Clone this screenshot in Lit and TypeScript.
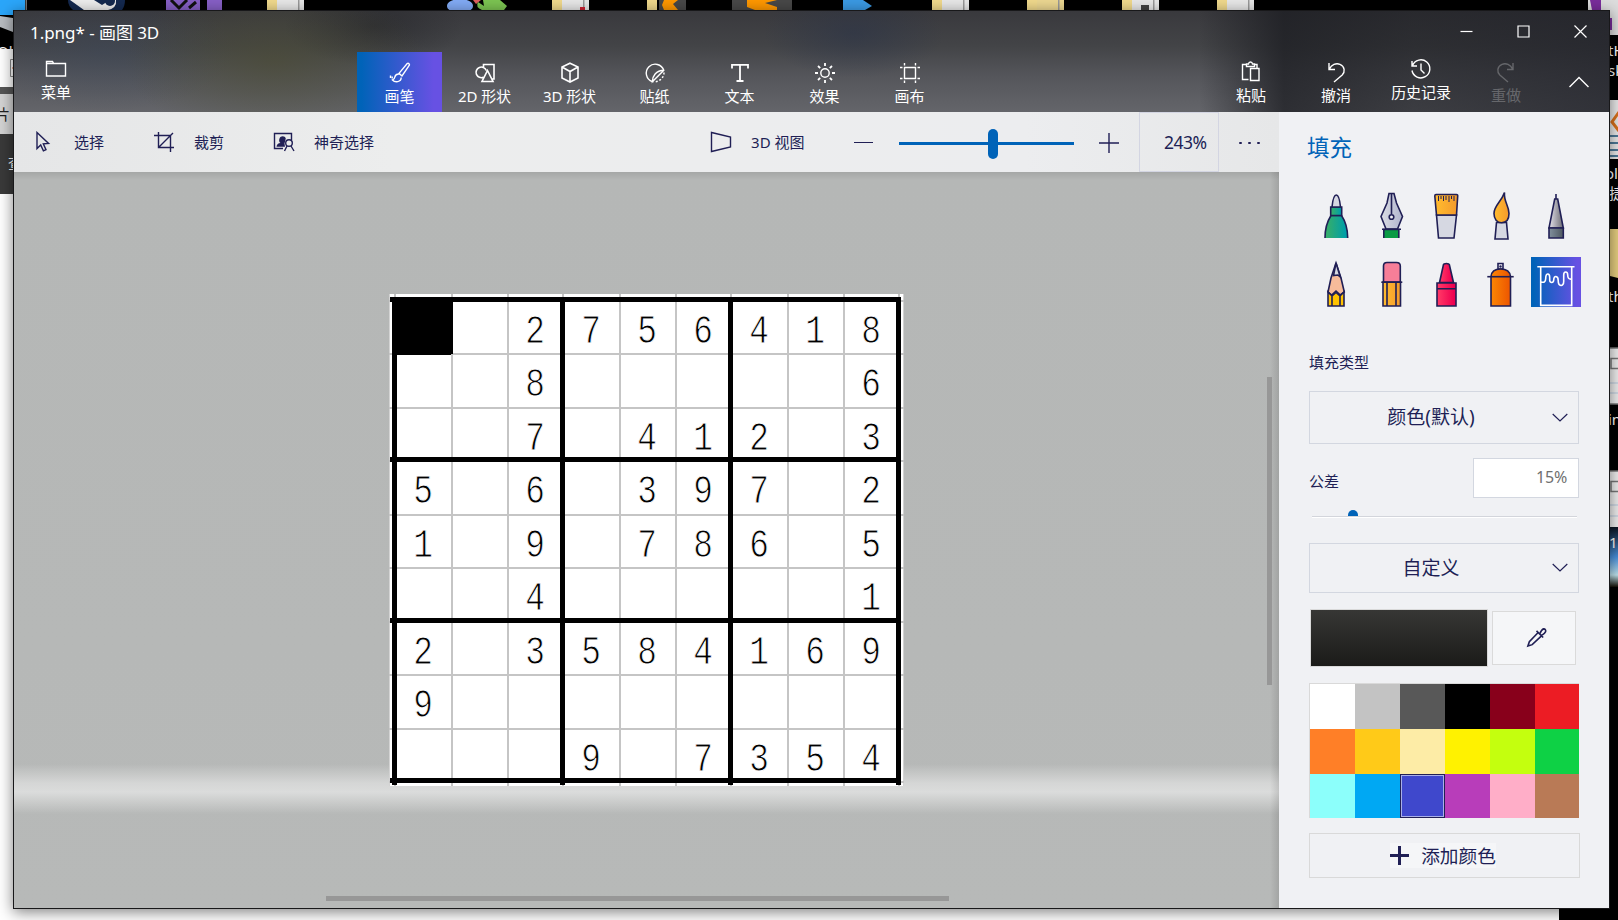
import { LitElement, html, svg, css } from "lit";
import { customElement } from "lit/decorators.js";
import { classMap } from "lit/directives/class-map.js";
import { styleMap } from "lit/directives/style-map.js";

const icons: Record<string, unknown> = {
  menu: svg`<path d="M1.500 3.500h6l1.200 2H20.500v12.500H1.500zM1.500 5.500h7.200"/>`,
  brush: svg`<path d="M18.200 1.500c1.200-.8 2.800.6 2 2L13 14l-3-2.600zM10 11.400l3 2.600M10 12c-2.300-.2-3.700 1-4.200 3.200-.3 1.800-.9 2.300-2.300 2.800 2.500 2.800 8.700 2.300 8.700-2.400M1.500 13.500v2.500M3.200 14.500v2"/>`,
  shapes2d: svg`<path stroke-width="1.600" d="M9.500 5.500V2.500h10.500v14.500H18M9.500 15.200A5.300 5.300 0 1 1 12.300 8.500M13.500 8.500l5.500 11h-11z"/>`,
  cube: svg`<path stroke-width="1.600" d="M11 1.200l8 3.800v11l-8 4-8-4V5zM3 5l8 4.500 8-4.500M11 9.500v10.500"/>`,
  sticker: svg`<path d="M8.300 19.700A9 9 0 1 1 19.800 8.300L8.300 19.700C8.300 14.500 12 8.300 19.800 8.300"/><path stroke-dasharray="2 1.800" d="M20 10.500C20 16 15 20.300 9.500 19.800"/>`,
  text: svg`<path stroke-width="1.800" d="M3 6.500V2.800h16v3.700M11 2.800v16.200M7.500 19h7"/>`,
  effects: svg`<circle cx="11" cy="11" r="4.200"/><path stroke-width="1.800" d="M11 1v3M11 18v3M1 11h3M18 11h3M4 4l2.200 2.200M15.800 15.800L18 18M4 18l2.200-2.200M15.800 6.200L18 4"/>`,
  canvas: svg`<path d="M5.500 1v2.500M5.500 18.500V21M16.500 1v2.500M16.500 18.500V21M1 5.500h2.500M18.500 5.500H21M1 16.500h2.500M18.500 16.500H21M5.500 5.500h11v11h-11z"/>`,
  paste: svg`<path d="M8.500 18.500H2.500V3.500h4M14.500 3.500h2.500v3.500M6.500 5.500v-2.500h2c.3-2.600 3.700-2.600 4 0h2v2.500zM10.500 7.500h8.500v12h-8.500z"/>`,
  undo: svg`<path d="M4 2v6.500h6M4.300 8.200C6.500 3.500 11 1.800 15 3.300c5 2 5.200 7.700 2.200 10.700L9 21"/>`,
  redo: svg`<path d="M18 2v6.500h-6M17.700 8.200C15.500 3.500 11 1.800 7 3.300c-5 2-5.200 7.700-2.200 10.700L13 21"/>`,
  history: svg`<path d="M2 3v5h5M2.500 7.500A9 9 0 1 1 2 12.500M11 5.500v6.500l3.500 3.500"/>`,
  select: svg`<path d="M4 1.500v16l3.700-3.600 2.700 6 2.600-1.200-2.700-5.900 5.300-.3z"/>`,
  crop: svg`<path d="M5.500 1v15.500H21M1 4.500h16.500V21M6 16L20 2"/>`,
  magic: svg`<path d="M10 17.500H1.500V2.500h17V9"/><path fill="currentColor" stroke="none" d="M3.500 15.800c.2-2.300 1.800-3.500 4-3.700C6 11 5.800 9 6.500 7.500 7.500 4.500 12 4.500 12.800 7.500l-1.300 5 .5 3.300z"/><circle cx="16" cy="12" r="3.300"/><path d="M18 15l3 5M14 15l-2.500 5"/>`,
  view3d: svg`<path d="M1.500 1.500v19L20.500 16V6z"/>`,
  picker: svg`<path stroke-width="1.700" d="M13 5.500l-9.500 10L2 20l4.500-1.500 10-9.500M11 4l7 7M14.500 7c1-2.500 2-4.500 4-5 1.800 0 2.500 1.500 2 3-.5 1.500-2 2.500-4.500 4"/>`,
};

const icon = (name: string, size = 22) =>
  html`<svg class="icon" width=${size} height=${size} viewBox="0 0 22 22">${icons[name]}</svg>`;

const tabs = [
  ["brush", "画笔"], ["shapes2d", "2D 形状"], ["cube", "3D 形状"], ["sticker", "贴纸"],
  ["text", "文本"], ["effects", "效果"], ["canvas", "画布"],
];

const brushes = [
  svg`<path fill="url(#teal)" d="M14 50c0-9 2.500-17 6-22.500h10.500c3.700 5.500 6.200 13.500 6.200 22.500"/><path fill="url(#teal)" d="M19.700 19h11v8.500h-11z"/><path fill="#d6d8e2" d="M21 19c.5-5 2-12 4.300-12s3.700 7 4.200 12z"/>`,
  svg`<path fill="#0a9a44" d="M17.800 50v-8.500h15V50"/><path fill="url(#steel)" d="M23 5.500h5l2.500 9.500 6 13.500-5 12.500H20l-5-12.500L21 15z"/><path d="M16 41.200h19M25.500 6v20"/><circle fill="#f0f1f4" cx="25.500" cy="29" r="2.300"/>`,
  svg`<path fill="#d6d8e2" d="M15.500 27h20l-2.500 23H17.500z"/><path fill="url(#amber)" d="M15 6.500h20.500c1 0 1.300.6 1.200 1.500L35.500 27h-20L13.800 8c0-1 .3-1.500 1.200-1.500z"/><path stroke-width="1" d="M17.500 8v5M20 8v3M22.500 8v5M25 8v4M28 8v6M30.500 8v3M33 8v5"/>`,
  svg`<path fill="#d6d8e2" d="M20.500 34.500h10L32 51H19z"/><path fill="url(#amber)" d="M28.500 4.500c-1 9 4.500 13 4.500 21 0 6-3 9.200-7.500 9.200S18 31 18 25.500c0-8 7-11 10.500-21z"/>`,
  svg`<path d="M25 6v5"/><path fill="url(#lead)" d="M23.700 11h3l5.600 29H18z"/><path fill="url(#slate)" d="M18 40h14.300v10H18z"/>`,
  svg`<path fill="#f6bb9a" d="M25 6l5 15 3.300 14-4 3-4.300-4-4.300 4-3.700-3L20 21z"/><path fill="#d6d8e2" d="M25 6l4.300 14-2.500-2-4.300.5z"/><path fill="#ffc200" d="M17 49V35l4 4 4-3.500 4 3.500 4-4v14zM21 39v10M29 39v10"/>`,
  svg`<path fill="url(#amber)" d="M17 25h17.500v24H17zM21 25v24M30 25v24"/><path fill="#f77e98" d="M17.500 25V9c0-2.500 1.500-3.500 3.500-3.500h9.500c2 0 3.800 1 3.800 3.500v16z"/><path d="M15.300 25.200h21"/>`,
  svg`<path fill="url(#pink)" d="M18.500 25.500l4-18c.3-1.300 5.500-1.300 5.800 0l4.200 18z"/><path fill="url(#pink)" d="M16 26h19v23H16zM16 31.700h19"/>`,
  svg`<path fill="#f0f1f4" d="M22 6.500h5V12h-5z"/><circle class="dot" cx="24.500" cy="9.500" r="1.200"/><path fill="url(#orange)" d="M15 49V19.500c.5-5 4-7.500 9.500-7.500s9.500 2.500 10 7.500V49z"/><path d="M11.300 19.700h26.400"/>`,
  svg`<g class="white"><path d="M6.300 9.700h37.200M9.700 9.700v38.700h31V9.700"/><path d="M9.700 25c3 .8 5 .2 5-3.500 0-5.500 4-6 4-1v2.500c0 3.500 4 3 4 0 0-5 4.500-4.500 4.500.5 0 6.500 5.500 6.500 5.500 1V18c0-4 4-4 4 0 0 3 1 4.500 4 4"/></g>`,
];

const swatches = [
  "#ffffff", "#c3c3c3", "#585858", "#000000", "#88001b", "#ec1c24",
  "#ff7f27", "#ffca18", "#fdeca6", "#fff200", "#c4ff0e", "#0ed145",
  "#8cfffb", "#00a8f3", "#3f48cc", "#b83dba", "#ffaec8", "#b97a56",
];

const puzzle = [
  "  2756418", "  8     6", "  7 412 3",
  "5 6 397 2", "1 9 786 5", "  4     1",
  "2 3584169", "9        ", "   9 7354",
];

const folder = (x: number, inner = "#e8e8e8") => svg`
  <path fill="#f0d98c" d="M${x} 0h10v10h-10z"/><path fill=${inner} d="M${x + 10} 0h27v10h-27z"/>
  <path fill="#999" d="M${x + 31} 0h1.500v10h-1.500z"/>`;

@customElement("desktop-backdrop")
class DesktopBackdrop extends LitElement {
  static styles = css`
    :host { display: block; overflow: hidden; }
    svg { display: block; }
    text { font-family: "Noto Sans", "Noto Sans CJK SC", sans-serif; font-size: 15px; fill: #fff; }
    .ink { fill: #222; }
  `;
  render() {
    return html`<svg width="1618" height="920" viewBox="0 0 1618 920">
      <defs>
        <linearGradient id="sky" x2="0" y2="1"><stop offset="0" stop-color="#0a1420"/><stop offset=".5" stop-color="#4a90dc"/><stop offset=".8" stop-color="#bfe4ee"/><stop offset="1" stop-color="#151005"/></linearGradient>
      </defs>
      <rect width="1618" height="920" fill="#000"/>
      <path fill="#2ba6fa" d="M0 0h25v10l-12 5H0z"/><path fill="#777" d="M25.500 0h1.500v10h-1.500z"/>
      <path fill="#b9bdc2" d="M0 16l13 2v14L0 27z"/><text x="-3" y="57">Oh</text>
      <path fill="#14294f" d="M68 0h57q0 6-3 10H73q-5-4-5-10z"/><path fill="#eee" d="M70 0h24l8 5 8-5h6q1 8-8 10H84z"/><circle cx="110" cy="1" r="5" fill="#14294f"/>
      <path fill="#865fc5" d="M166 0h34v10h-34zM207 0h15v10h-15z"/><path stroke="#111" stroke-width="3" fill="none" d="M171 0l8 8 8-8M189 8l7-6"/>
      ${folder(267)}
      <ellipse cx="460" cy="6" rx="13" ry="7" fill="#82abf5"/><path fill="#e06060" d="M473 0h8l-5 4z"/><path fill="#7cc452" d="M483 0h17l7 6-3 4h-22q-7-3-4-8l6 4z"/>
      ${folder(552)}<path fill="#c23" d="M580 7h5v3h-5z"/>
      <path fill="#f0d98c" d="M647 0h10v10h-10z"/><path fill="#484848" d="M659 0h27v10h-27z"/><path fill="#ff9800" d="M664 0h14l-5 4 5 6h-14l-2-5z"/>
      <path fill="#484848" d="M732 0h60v10h-60z"/><path fill="#ff9800" d="M747 0h30l-12 3 12 4v3h-22l-8-3z"/>
      <path fill="#3b9ae4" d="M843 0h20l9 6-7 4h-22z"/>
      ${folder(932)}${folder(1027, "#ecd791")}${folder(1122)}<path fill="#444" d="M1141 5h8v5h-8z"/>${folder(1217)}
      <path fill="#ddd" d="M1588 0h30v35h-30z"/><path fill="#7a2d9c" d="M1590 0h11v10h-9z"/><path fill="#7a2d9c" d="M1610 18h2v12h-2z"/>
      <path fill="#fff" d="M0 49h14v38H0z"/><path fill="none" stroke="#888" d="M14 59.500h-3.500v17H14"/><path stroke="#d9602c" d="M12 68h2"/>
      <path fill="#555" d="M0 87h14v7H0z"/><path fill="#d4d4d4" d="M0 94h14v40H0z"/>
      <path fill="#3a3a3a" d="M0 134h14v60H0z"/>
      <text class="ink" x="-5" y="120">片</text><text x="8" y="169">查</text>
      <path fill="#fff" d="M0 194h14v726H0zM0 909h1559v11H0z"/>
      <text x="1608" y="56">tH</text><text x="1608" y="76">sk</text>
      <path fill="#e9e9e9" d="M1610 100h8v59h-8z"/><path stroke="#d9701c" stroke-width="3" fill="none" d="M1619 112l-7 10 7 9"/><path stroke="#4c7896" stroke-width="2" d="M1610 136h8M1610 143h8M1610 150h8M1610 156h8"/>
      <text x="1605" y="179">ol</text><text x="1609" y="199">捷</text>
      <path fill="#e7cf7f" d="M1610 193"/><path fill="#e7cf7f" d="M1610 229h8v49l-8-2z"/><text x="1608" y="302">th</text>
      <path fill="#eee" d="M1610 348h8v56h-8zM1610 471h8v56h-8z"/><path stroke="#777" stroke-width="1.500" fill="none" d="M1618 358.500h-7v10h7M1618 481.500h-7v10h7M1610 348h8M1610 404h8M1610 471h8"/>
      <path stroke="#b6c8dc" d="M1610 383h8M1610 393h8M1610 505h8M1610 516h8"/>
      <text x="1608" y="425">in</text><path fill="url(#sky)" d="M1610 527h8v60h-8z"/><text x="1609" y="548">1</text>
    </svg>`;
  }
}

@customElement("sudoku-picture")
class SudokuPicture extends LitElement {
  static styles = css`
    :host { display: grid; width: 515px; height: 492px; background: #fff; box-shadow: inset 1px 0 #d3d3d3, inset -1px 0 #d3d3d3; }
    svg, .digits { grid-area: 1 / 1; }
    .digits { display: grid; grid-template: repeat(9, 53.5px) / repeat(9, 56px); padding: 9px 0 0 7px; }
    .digit { display: flex; align-items: center; justify-content: center; font: 41px/1 "Liberation Mono", monospace; color: #000; -webkit-text-stroke: .9px #fff; transform: scaleX(.8); padding: 5px 2px 0 0; }
  `;
  render() {
    const gx = [62, 118, 230, 286, 397.5, 453.5];
    const gy = [59, 112.5, 219.5, 273, 380, 433.5];
    const bx = [3, 171, 339, 507];
    const by = [3, 163, 324, 484];
    return html`
      <svg width="515" height="492" shape-rendering="crispEdges">
        ${gx.map((x) => svg`<rect x=${x} y="0" width="2" height="492" fill="#c5c5c5"/>`)}
        ${gy.map((y) => svg`<rect x="0" y=${y} width="515" height="2" fill="#c5c5c5"/>`)}
        ${bx.map((x) => svg`<rect x=${x + 2} y="0" width="2" height="492" fill="#c5c5c5"/>`)}
        ${by.map((y) => svg`<rect x="0" y=${y + 3} width="515" height="2" fill="#c5c5c5"/>`)}
        ${bx.map((x) => svg`<rect x=${x} y="3" width="5" height="488"/>`)}
        ${by.map((y) => svg`<rect x="1" y=${y} width="511" height="5"/>`)}
        <path d="M3 3h61v57h-2v1H3z"/>
      </svg>
      <div class="digits">
        ${puzzle.flatMap((row) => [...row].map((d) => html`<span class="digit">${d.trim()}</span>`))}
      </div>`;
  }
}

@customElement("fill-panel")
class FillPanel extends LitElement {
  static styles = css`
    :host { display: flex; flex-direction: column; box-sizing: border-box; width: 330px; padding: 21px 30px 0; background: #f0f1f4; color: #201f55; }
    * { box-sizing: border-box; }
    .icon { display: block; fill: none; stroke: currentColor; stroke-width: 1.2; }
    .title { font-size: 22.500px; line-height: 30px; color: #0063b8; margin-left: -2px; }
    .brushes { display: grid; grid-template-columns: repeat(5, 50px); column-gap: 5px; row-gap: 19px; margin: 25px 0 0 2px; }
    .brush { height: 50px; }
    .brush svg { display: block; fill: none; stroke: #201f55; stroke-width: 1.6; overflow: visible; }
    .brush.on { background: linear-gradient(90deg, #0063b8 5%, #6751e3 92%); }
    .dot { fill: #201f55; stroke: none; }
    .white { stroke: #fff; }
    .label { font-size: 15px; line-height: 20px; }
    .type { margin-top: 45px; }
    .select { display: grid; grid-template-columns: 242px 1fr; align-items: center; height: 53px; margin-top: 19px; border: 1px solid #d3d7e0; font-size: 19px; text-align: center; }
    .select span { padding-bottom: 3px; }
    .tolerance { display: flex; justify-content: space-between; margin-top: 14px; }
    .tolerance .label { margin-top: 13px; }
    .value { width: 106px; height: 40px; border: 1px solid #d3d7e0; background: #fff; color: #707070; font-size: 16px; line-height: 37px; text-align: right; padding-right: 11px; letter-spacing: -.2px; }
    .track { height: 7px; margin: 12px 2px 0 3px; border-bottom: 1px solid #d3d5db; padding-left: 36px; box-shadow: 0 1px #fff; }
    .thumb { width: 10px; height: 6px; background: #0063b8; border-radius: 5px 5px 0 0; }
    .custom { height: 50px; margin-top: 26px; }
    .current { display: flex; align-items: center; gap: 4px; margin: 16px 2px 0 1px; }
    .colour { width: 178px; height: 58px; border: 1px solid #d9d9d9; background: linear-gradient(#373735, #1b1b19); }
    .picker { width: 84px; height: 54px; border: 1px solid #dadada; background: #f5f6f8; display: grid; place-items: center; padding: 0 0 1px 4px; }
    .palette { display: grid; grid-template-columns: repeat(6, 45px); grid-auto-rows: 45px; height: 135px; margin-top: 16px; overflow: hidden; border: solid #d9d9d9; border-width: 1px 0 0 1px; }
    .on-colour { border: 1px solid #201f55; box-shadow: inset 0 0 0 1px #a9afe8; height: 44px; }
    .add { display: flex; align-items: center; justify-content: center; width: 271px; height: 45px; margin-top: 15px; border: 1px solid #d9d9d9; padding-right: 3px; }
    .add-inner { display: flex; align-items: center; gap: 12px; height: 25px; line-height: 23px; background: #f5f6f8; font-size: 18.700px; padding-bottom: 1px; }
    .heavy { stroke-width: 3; }
  `;
  chevron = () => html`<svg class="icon" width="16" height="10"><path d="M.7 1l7.300 7 7.300-7"/></svg>`;
  render() {
    return html`
      <div class="title">填充</div>
      <div class="brushes">
        ${brushes.map((b, i) => html`<div class=${classMap({ brush: true, on: i === 9 })}>
          <svg width="50" height="50" viewBox="0 0 50 50">
            <defs>
              ${[["teal", "#34ad6c", "#009fa8"], ["steel", "#d6d8e2", "#b4b8cf"], ["amber", "#ffb92e", "#f59d2c"],
                ["lead", "#d8d6de", "#77767e"], ["slate", "#7c8a97", "#535d66"], ["pink", "#ff3565", "#ee0050"], ["orange", "#fb8204", "#ee5a00"]]
                .map(([id, a, c]) => svg`<linearGradient id=${id}><stop offset=".1" stop-color=${a}/><stop offset=".9" stop-color=${c}/></linearGradient>`)}
            </defs>${b}
          </svg></div>`)}
      </div>
      <div class="label type">填充类型</div>
      <div class="select"><span>颜色(默认)</span>${this.chevron()}</div>
      <div class="tolerance"><span class="label">公差</span><div class="value">15%</div></div>
      <div class="track"><div class="thumb"></div></div>
      <div class="select custom"><span>自定义</span>${this.chevron()}</div>
      <div class="current"><div class="colour"></div><div class="picker">${icon("picker", 21)}</div></div>
      <div class="palette">
        ${swatches.map((c, i) => html`<div class=${classMap({ "on-colour": i === 14 })} style=${styleMap({ background: c })}></div>`)}
      </div>
      <div class="add"><div class="add-inner">
        <svg class="icon heavy" width="19" height="19"><path d="M9.500 0v19M0 9.500h19"/></svg>添加颜色
      </div></div>`;
  }
}

@customElement("app-root")
class AppRoot extends LitElement {
  static styles = css`
    :host { display: grid; width: 1618px; height: 920px; overflow: hidden; font-family: "Noto Sans", "Noto Sans CJK SC", sans-serif; }
    * { box-sizing: border-box; }
    desktop-backdrop, .window { grid-area: 1 / 1; }
    .window { display: grid; grid-template: 101px 1fr / 1265px 330px; width: 1597px; height: 899px; margin: 10px 0 0 13px; border: 1px solid #18181a; box-shadow: 0 3px 14px rgba(0,0,0,.5); z-index: 1; }
    .icon { display: block; fill: none; stroke: currentColor; stroke-width: 1.4; }
    .header { grid-column: 1 / 3; color: #fff; display: grid; grid-template-rows: 41px 60px;
      background:
        radial-gradient(ellipse 150px 80px at 260px 50px, rgba(76,76,50,.6), transparent),
        radial-gradient(ellipse 130px 60px at 90px 40px, rgba(60,72,92,.45), transparent),
        radial-gradient(ellipse 90px 45px at 840px 22px, rgba(40,50,72,.5), transparent),
        radial-gradient(ellipse 90px 40px at 360px 15px, rgba(30,31,35,.5), transparent),
        linear-gradient(90deg, transparent 1185px, rgba(27,28,33,.75) 1270px, rgba(27,28,33,.55) 1400px, rgba(32,33,40,.75) 1595px),
        linear-gradient(#39393d, #434447 35%, #55565b 65%, #64656a); }
    .titlebar { display: flex; align-items: center; padding-left: 16px; }
    .title { flex: 1; font-size: 17px; letter-spacing: -.05px; padding-bottom: 1px; white-space: pre; }
    .control { width: 57px; display: grid; place-items: center; padding-right: 1px; }
    .control .icon { stroke-width: 1.2; }
    .commands { display: flex; }
    .command { width: 85px; display: flex; flex-direction: column; align-items: center; padding-top: 10px; font-size: 15px; line-height: 20px; letter-spacing: -.1px; white-space: nowrap; }
    .command .icon { margin-bottom: 2px; }
    .raised { padding: 6px 1px 0 0; }
    .paste { padding: 9px 1px 0 0; }
    .active { background: linear-gradient(90deg, #0063b8 5%, #6751e3 90%); }
    .dim { color: #66676b; }
    .tabs { display: flex; margin-left: 258px; }
    .edit { display: flex; margin-left: auto; }
    .collapse { width: 60px; display: grid; place-items: center; }
    .left { display: grid; grid-template-rows: 60px 1fr; min-width: 0; }
    .toolbar { display: flex; align-items: center; background: linear-gradient(90deg, #e5e6e7, #eceded 30%, #ecedef 80%, #e6e7e8); color: #201f55; font-size: 15px; white-space: nowrap; }
    .tool { display: flex; align-items: center; gap: 19px; margin-left: 19px; }
    .tool span { padding-bottom: 2px; }
    .tool-crop { margin-left: 49px; }
    .tool-magic { margin-left: 49px; }
    .tool-view { margin-left: 336px; width: 97px; }
    .minus { margin-left: 47px; width: 19px; height: 1px; background: #201f55; }
    .zoom { width: 175px; height: 3px; margin: 3px 0 0 26px; background: #0063b8; display: flex; align-items: center; padding-left: 89px; }
    .zoom-thumb { width: 10px; height: 30px; border-radius: 5px; background: #0063b8; flex: none; }
    .plus { margin: 2px 0 0 25px; }
    .percent { width: 80px; height: 60px; line-height: 58px; margin-left: 20px; border: 1px solid #d3d5e2; font-size: 17.500px; letter-spacing: -.5px; padding-left: 24px; }
    .dots { display: flex; gap: 6.500px; margin: 2px 0 0 20px; }
    .dots i { width: 2.500px; height: 2.500px; border-radius: 1px; background: #201f55; }
    .stage { display: grid; grid-template: 1fr 5px / 1fr 5px; padding: 0 7px 7px 0;
      background:
        linear-gradient(rgba(0,0,0,.09), transparent 8px),
        linear-gradient(270deg, rgba(0,0,0,.11), transparent 9px),
        linear-gradient(transparent 592px, rgba(255,255,255,.42) 611px, rgba(255,255,255,.5) 620px, transparent 642px),
        linear-gradient(#b5b7b6, #b6b8b7 65%, #b7b9b8); }
    .paper { padding: 122px 0 0 375px; }
    .vbar { width: 5px; height: 308px; margin-top: 205px; background: #979797; }
    .hbar { width: 623px; height: 5px; margin-left: 312px; background: #979797; }
  `;

  command = (name: string, label: string, extra: Record<string, boolean> = {}) =>
    html`<div class=${classMap({ command: true, ...extra })}>${icon(name)}<span>${label}</span></div>`;

  render() {
    return html`
      <desktop-backdrop></desktop-backdrop>
      <div class="window">
        <header class="header">
          <div class="titlebar">
            <div class="title">1.png* - 画图 3D</div>
            <div class="control"><svg class="icon" width="13" height="13"><path d="M.5 6.500h12"/></svg></div>
            <div class="control"><svg class="icon" width="13" height="13"><path d="M1 1h11v11H1z"/></svg></div>
            <div class="control"><svg class="icon" width="13" height="13"><path d="M.5.5l12 12M12.500.5l-12 12"/></svg></div>
          </div>
          <div class="commands">
            ${this.command("menu", "菜单", { raised: true })}
            <div class="tabs">${tabs.map(([n, l], i) => this.command(n, l, { active: i === 0 }))}</div>
            <div class="edit">
              ${this.command("paste", "粘贴", { paste: true })}
              ${this.command("undo", "撤消", { paste: true })}
              ${this.command("history", "历史记录", { raised: true })}
              ${this.command("redo", "重做", { paste: true, dim: true })}
            </div>
            <div class="collapse"><svg class="icon" width="20" height="12"><path d="M.5 11L10 1.500 19.500 11"/></svg></div>
          </div>
        </header>
        <div class="left">
          <div class="toolbar">
            <div class="tool">${icon("select")}<span>选择</span></div>
            <div class="tool tool-crop">${icon("crop")}<span>裁剪</span></div>
            <div class="tool tool-magic">${icon("magic")}<span>神奇选择</span></div>
            <div class="tool tool-view">${icon("view3d")}<span>3D 视图</span></div>
            <div class="minus"></div>
            <div class="zoom"><div class="zoom-thumb"></div></div>
            <svg class="icon plus" width="20" height="20"><path d="M10 0v20M0 10h20"/></svg>
            <div class="percent">243%</div>
            <div class="dots"><i></i><i></i><i></i></div>
          </div>
          <div class="stage">
            <div class="paper"><sudoku-picture></sudoku-picture></div>
            <div class="vbar"></div>
            <div class="hbar"></div>
          </div>
        </div>
        <fill-panel></fill-panel>
      </div>`;
  }
}
